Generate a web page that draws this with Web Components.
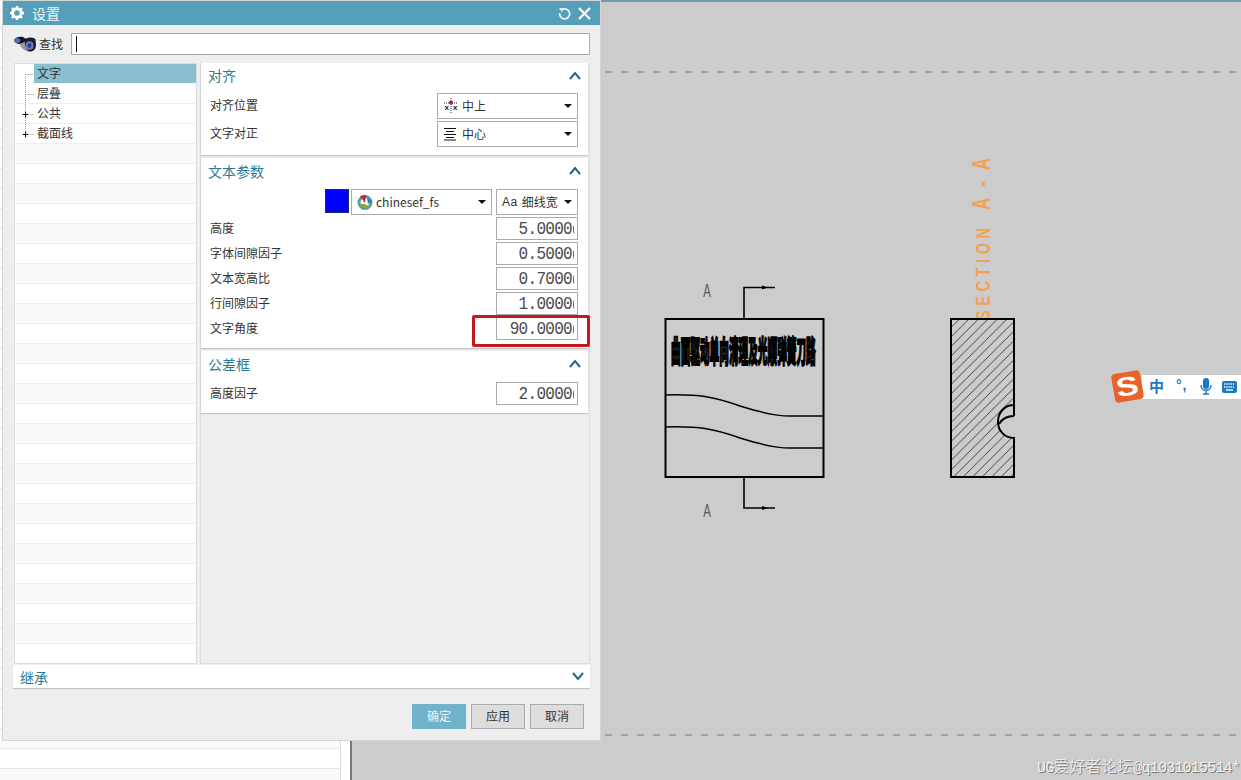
<!DOCTYPE html>
<html lang="zh">
<head>
<meta charset="utf-8">
<title>设置</title>
<style>
html,body{margin:0;padding:0;width:1241px;height:780px;overflow:hidden;background:#ccc;font:12px/1.2 "Noto Sans CJK SC","Liberation Sans",sans-serif;color:#333}
</style>
</head>
<body>
<ug-desktop>
  <ug-dialog slot="dialog" heading="设置">
    <ug-search></ug-search>
    <ug-main>
      <ug-tree slot="tree">
        <ug-tree-row selected first>文字</ug-tree-row>
        <ug-tree-row>层叠</ug-tree-row>
        <ug-tree-row expand>公共</ug-tree-row>
        <ug-tree-row expand last>截面线</ug-tree-row>
      </ug-tree>
      <ug-section heading="对齐" style="--top:4px;--ly:-2px;--ty:-2px">
        <ug-row label="对齐位置"><ug-select w="141">
          <svg slot="icon" width="16" height="16" viewBox="0 0 16 16"><path d="M8 0v16M1 5h14" stroke="#333" stroke-width="1" stroke-dasharray="1 1" fill="none"/><circle cx="8" cy="4.500" r="2" fill="#a81c3c"/><text x="1.500" y="12" font-size="8" font-weight="700" font-family="Liberation Sans" fill="#222">x</text><text x="10" y="12" font-size="8" font-weight="700" font-family="Liberation Sans" fill="#222">x</text></svg>中上</ug-select></ug-row>
        <ug-row label="文字对正"><ug-select w="141">
          <svg slot="icon" width="16" height="16" viewBox="0 0 16 16"><path d="M1 2.500h12M3 5.500h8M1 8.500h12M3 11.500h8M1 14h12" stroke="#111" stroke-width="1" fill="none"/></svg>中心</ug-select></ug-row>
      </ug-section>
      <ug-section heading="文本参数">
        <ug-row>
          <ug-swatch></ug-swatch>
          <ug-select w="141">
            <svg slot="icon" width="16" height="16" viewBox="0 0 16 16"><circle cx="8" cy="8.500" r="6" fill="none" stroke="#4aa0a8" stroke-width="3"/><path d="M2 10c2 5 9 6 12 1-3 1-5 0-6-1z" fill="#8aa840"/><path d="M3 2l6-1-1 8z" fill="#c4242c"/><path d="M10 4l5 3-4 3z" fill="#2a7ab8"/></svg>chinesef_fs</ug-select>
          <ug-select w="82" gap="0"><span style="font-family:'Liberation Sans';letter-spacing:.5px;margin-right:4px">Aa</span>细线宽</ug-select>
        </ug-row>
        <ug-row label="高度"><ug-num>5.0000</ug-num></ug-row>
        <ug-row label="字体间隙因子"><ug-num>0.5000</ug-num></ug-row>
        <ug-row label="文本宽高比"><ug-num>0.7000</ug-num></ug-row>
        <ug-row label="行间隙因子"><ug-num>1.0000</ug-num></ug-row>
        <ug-row label="文字角度"><ug-num>90.0000</ug-num></ug-row>
      </ug-section>
      <ug-section heading="公差框">
        <ug-row label="高度因子"><ug-num>2.0000</ug-num></ug-row>
      </ug-section>
    </ug-main>
    <ug-collapsed>继承</ug-collapsed>
    <ug-footer>
      <ug-button primary>确定</ug-button>
      <ug-button>应用</ug-button>
      <ug-button>取消</ug-button>
    </ug-footer>
    <ug-highlight></ug-highlight>
  </ug-dialog>
  <ug-drawing slot="canvas"></ug-drawing>
</ug-desktop>
<script>
function def(name, css, html, setup){
  customElements.define(name, class extends HTMLElement{
    connectedCallback(){
      if(this.shadowRoot) return;
      const r=this.attachShadow({mode:'open'});
      const h=typeof html==='function'?html(this):html;
      r.innerHTML='<style>'+css+'</style>'+h;
      if(setup) setup(this,r);
    }
  });
}
const CHEV_UP='<svg style="margin-bottom:2px" width="12" height="9" viewBox="0 0 12 9"><path d="M1 8l5-6 5 6" fill="none" stroke="#1d6a85" stroke-width="2"/></svg>';
const CHEV_DOWN='<svg width="12" height="9" viewBox="0 0 12 9"><path d="M1 1l5 6 5-6" fill="none" stroke="#1d6a85" stroke-width="2"/></svg>';

def('ug-desktop',`
  :host{display:flex;position:relative;width:1241px;height:780px;background:#ccc;overflow:hidden}
  .list{flex:none;background:repeating-linear-gradient(#fff 0,#fff 8px,#e8e8e8 8px,#e8e8e8 9px,#fafafa 9px,#fafafa 28px,#e8e8e8 28px,#e8e8e8 29px,#fff 29px,#fff 40px);border-right:1px solid #ddd;box-sizing:border-box;width:341px}
  .gap{width:9px;flex:none;background:#fff}
  .rule{width:2px;flex:none;background:#777}
  .canvas{flex:1;position:relative;background:#ccc;border-top:2px solid #6f9ab0;height:778px}
`,`<div class="list"></div><div class="gap"></div><div class="rule"></div>
  <div class="canvas"><slot name="canvas"></slot></div>
  <slot name="dialog"></slot>`);

def('ug-dialog',`
  :host{position:absolute;left:3px;top:1px;width:597px;height:739px;background:#eee;box-shadow:0 0 0 1px #d4d4d4;display:flex;flex-direction:column;box-sizing:border-box}
  .title{height:24px;flex:none;background:#559fba;display:flex;align-items:center;color:#eef6f9;font-size:14px}
  .gear{margin:0 8px 0 7px;display:block}
  .txt{flex:1;line-height:24px}
  .btns{display:flex;gap:7px;margin-right:9px;align-items:center}
`,t=>`<div class="title">
    <svg class="gear" width="14" height="14" viewBox="0 0 14 14"><circle cx="7" cy="7" r="4.300" fill="none" stroke="#fff" stroke-width="3"/><path d="M7 0v3M7 11v3M0 7h3M11 7h3M2 2l2 2M10 10l2 2M12 2l-2 2M4 10l-2 2" stroke="#fff" stroke-width="2.400"/></svg>
    <span class="txt">${t.getAttribute('heading')}</span>
    <span class="btns">
      <svg width="13" height="13" viewBox="0 0 13 13"><path d="M4 2.600A5 5 0 1 1 1.700 6.200" fill="none" stroke="#e6f2f6" stroke-width="1.800"/><path d="M1 1l4.500.3L4 5.200z" fill="#e6f2f6"/></svg>
      <svg width="13" height="13" viewBox="0 0 13 13"><path d="M1 1l11 11M12 1L1 12" stroke="#fff" stroke-width="2.200"/></svg>
    </span>
  </div><slot></slot>`);

def('ug-search',`
  :host{display:flex;align-items:center;height:22px;margin:8px 10px 8px 11px;flex:none}
  svg{display:block;flex:none}
  .l{width:32px;margin-left:3px;flex:none;color:#333}
  .in{flex:1;height:22px;box-sizing:border-box;background:#fff;border:1px solid #aaa;display:flex;align-items:center;padding-left:4px}
  .c{width:1px;height:16px;background:#111}
`,`<svg width="22" height="17" viewBox="0 0 22 17">
    <path d="M5 7l6-3 5 2-1 10-5-2-3-3z" fill="#9a9a9a"/>
    <path d="M0 4C1 1.500 5 0 9 1l3 2-1.500 3-5 2C3 8 .6 6.500 0 4z" fill="#16161c"/>
    <ellipse cx="3.300" cy="4.600" rx="3" ry="2.300" fill="#5c70c0"/>
    <path d="M11 3C15 .8 20 1 21.500 3.500L22 9c0 4-3 7-6 6.500-3-.5-6-5-5-12.500z" fill="#1a1c26"/>
    <ellipse cx="15.500" cy="9.500" rx="4" ry="4.200" fill="#6a7ccc"/>
    <ellipse cx="15.500" cy="9.500" rx="2" ry="2.200" fill="#303a90"/>
  </svg>
  <span class="l">查找</span><div class="in"><div class="c"></div></div>`);

def('ug-main',`
  :host{display:flex;height:601px;margin:0 10px 0 11px;gap:3px;flex:none}
  .p{flex:1;background:#eee;border:1px solid #ddd;border-top:0;box-sizing:border-box;display:flex;flex-direction:column;gap:3px;padding-right:1px}
`,`<slot name="tree"></slot><div class="p"><slot></slot></div>`);

def('ug-tree',`
  :host{display:block;width:183px;flex:none;height:601px;background:#fff;border:1px solid #ddd;box-sizing:border-box;overflow:hidden}
  .e{height:19px;border-bottom:1px solid #eee;background:#fff}
  .e.a{background:#fafafa}
`,()=>{let s='<slot></slot>';for(let i=0;i<26;i++)s+=`<div class="e ${i%2?'':'a'}"></div>`;return s;});

def('ug-tree-row',`
  :host{display:flex;height:19px;border-bottom:1px solid #eee;align-items:center;background:#fff}
  svg{display:block;flex:none}
  .t{flex:1;height:19px;line-height:17px;padding-left:3px;color:#333}
  :host([selected]){border-bottom-color:#fff}
  :host([selected]) .t{background:#89bfd0}
`,t=>{
  const a=t.hasAttribute('first')?10:0, b=t.hasAttribute('last')?10:20;
  const plus=t.hasAttribute('expand')?'<rect x="6.500" y="6.500" width="8" height="8" fill="#fff"/><path d="M7.500 10.500h6M10.500 7.500v6" stroke="#111" stroke-width="1"/>':'';
  return `<svg width="19" height="20" viewBox="0 0 19 20"><path d="M10.500 ${a}V${b}M10.500 10.500H19" stroke="#999" stroke-dasharray="1 1" fill="none"/>${plus}</svg><div class="t"><slot></slot></div>`;
});

def('ug-section',`
  :host{display:block;background:#fff;box-shadow:0 1px 1px #c4c4c4;padding-bottom:8px;flex:none}
  .h{height:26px;display:flex;align-items:center;justify-content:space-between;padding:0 7px 0 7px;color:#2a7a96;font-size:14px}
  .h span{margin-top:var(--ty,0)}
  .b{display:flex;flex-direction:column;gap:2px;padding-top:var(--top,5px)}
`,t=>`<div class="h"><span>${t.getAttribute('heading')}</span>${CHEV_UP}</div><div class="b"><slot></slot></div>`);

def('ug-row',`
  :host{display:flex;align-items:center;justify-content:flex-end;padding:0 10px 0 9px;gap:4px}
  .l{flex:1;color:#333;margin-top:var(--ly,0)}
  .l:empty{display:none}
`,t=>`<span class="l">${t.getAttribute('label')||''}</span><slot></slot>`);

def('ug-select',`
  :host{display:flex;align-items:center;height:26px;box-sizing:border-box;border:1px solid #aaa;background:#fff;padding-left:5px;color:#333;flex:none}
  .i{display:flex;flex:none}
  .x{flex:1;white-space:nowrap;font-size:12px;display:flex;align-items:center;min-width:0}
  .a{width:0;height:0;border:4px solid transparent;border-top:4.500px solid #111;border-bottom:0;flex:none;margin-right:5px}
`,t=>`<span class="i" style="margin-right:${t.getAttribute('gap')||3}px"><slot name="icon"></slot></span><span class="x"><slot></slot></span><span class="a"></span>`,
(t)=>{t.style.width=t.getAttribute('w')+'px';});

def('ug-swatch',`:host{display:block;width:24px;height:24px;box-sizing:border-box;background:#0000ff;border:1px solid #1c2a6a;margin:0 -2px 2px 0;flex:none}`,'');

def('ug-num',`
  :host{display:flex;justify-content:flex-end;align-items:center;width:82px;height:23px;box-sizing:border-box;border:1px solid #aaa;background:#fff;flex:none;padding-right:1px}
  div{font:16px/21px "Liberation Mono",monospace;letter-spacing:-.7px;color:#4a4a4a;white-space:nowrap;transform:translateY(1.500px) scaleY(1.14)}
  i{display:block;width:2px;height:9px;border-left:1.500px solid #666;border-radius:50%;margin:2px 0 0 1px;box-sizing:content-box}
`,`<div><slot></slot></div><i></i>`);

def('ug-collapsed',`
  :host{display:flex;height:23px;margin:1px 10px 0 10px;flex:none;background:#fff;box-shadow:0 1px 1px #c4c4c4;align-items:center;justify-content:space-between;padding:0 6px 0 7px;color:#2a7a96;font-size:14px}
`,`<span style="margin-top:1px"><slot></slot></span><span style="margin-bottom:1px;display:flex">${CHEV_DOWN}</span>`);

def('ug-footer',`
  :host{display:flex;justify-content:flex-end;gap:5px;margin:16px 16px 0 0;flex:none}
`,`<slot></slot>`);

def('ug-button',`
  :host{display:flex;width:54px;height:25px;box-sizing:border-box;align-items:center;justify-content:center;background:#ddd;border:1px solid #aaa;color:#333;font-size:12px}
  :host([primary]){background:#70b2c9;border-color:#70b2c9;color:#eef6f9}
`,`<slot></slot>`);

def('ug-highlight',`
  :host{position:absolute;left:469px;top:314px;width:118px;height:32px;box-sizing:border-box;border:3px solid #c41a1f;border-radius:2px;pointer-events:none}
`,'');

def('ug-drawing',`
  :host{display:block;position:absolute;inset:-2px 0 0 0}
  svg{position:absolute;left:0;top:0;display:block}
  .wm{position:absolute;right:1px;bottom:3px;color:#f2f2f2;text-shadow:1px 1px 0 #777;white-space:nowrap;line-height:18px}
  .wm .l{font:15px "Liberation Mono",monospace;letter-spacing:-.8px}
  .wm .c{font:16px "Noto Sans CJK SC",sans-serif;font-weight:300}
`,`<svg width="889" height="780" viewBox="352 0 889 780">
  <defs>
    <pattern id="h" width="9.500" height="9.500" patternUnits="userSpaceOnUse" patternTransform="translate(950 319)">
      <path d="M-1 10.500L10.500 -1M-1 1L1 -1M8.500 10.500L10.500 8.500" stroke="#333" stroke-width=".9" fill="none"/>
    </pattern>
  </defs>
  <path d="M605 72H1241M605 735H1241" stroke="#777" stroke-width="1" stroke-dasharray="7 9" fill="none"/>
  <rect x="665.500" y="319" width="158" height="158" fill="none" stroke="#000" stroke-width="2"/>
  <path d="M744 319V287.500H775M744 477V508H775" fill="none" stroke="#000" stroke-width="1.600"/>
  <path d="M762 285.500l6 2-6 2zM762 506l6 2-6 2z" fill="#000"/>
  <path d="M665 395C700 394 715 397 740 406C762 413 775 416 790 416H823M665 427C700 426 715 429 740 438C762 445 775 448 790 448H823" fill="none" stroke="#000" stroke-width="1.500"/>
  <text transform="translate(707 297) scale(.6 1)" text-anchor="middle" font-family="Liberation Sans" font-size="19" fill="#555">A</text>
  <text transform="translate(707 517) scale(.6 1)" text-anchor="middle" font-family="Liberation Sans" font-size="19" fill="#555">A</text>
  <text transform="translate(671 362) scale(.322 1)" font-family="Noto Sans CJK SC" font-size="30" font-weight="900" stroke="#000" stroke-width="2" fill="#000">曲面驱动单向清理及光顺弹簧刀路</text>
  <text transform="translate(990 320) rotate(-90) scale(.72 1)" font-family="Liberation Sans" font-weight="700" font-size="20" fill="#f4a252" style="letter-spacing:6.500px">SECTION</text>
  <text transform="translate(990 210) rotate(-90) scale(.68 1)" font-family="Liberation Sans" font-weight="700" font-size="25" fill="#f4a252" style="letter-spacing:5px" xml:space="preserve">A - A</text>
  <path d="M951 319H1014V405C1005 405 998 412 998 422C998 431 1005 438 1014 438V477H951Z" fill="#ccc"/>
  <path d="M951 319H1014V405C1005 405 998 412 998 422C998 431 1005 438 1014 438V477H951Z" fill="url(#h)"/>
  <path d="M1014 405V416C1007 416 1002 419 999 424" fill="#ccc"/>
  <path d="M1014 416C1007 416 1002 419 999 424" fill="none" stroke="#000" stroke-width="2"/>
  <path d="M1014 416V319H951V477H1014V438C1005 438 998 431 998 422C998 412 1005 405 1014 405" fill="none" stroke="#000" stroke-width="2"/>
</svg>
<div class="wm"><span class="l">UG</span><span class="c">爱好者论坛</span><span class="l">@q1031015514*</span></div>
<ug-ime></ug-ime>`);

def('ug-ime',`
  :host{position:absolute;left:760px;top:369px;width:129px;height:36px;display:block}
  .b{position:absolute;left:30px;top:6px;right:0;height:24px;background:#fff}
  .logo{position:absolute;left:1px;top:3px;width:29px;height:29px;background:#e8622a;border-radius:4px;transform:rotate(-10deg);color:#fff;text-align:center;font:900 28px/29px "Liberation Sans",sans-serif}
  .logo span{display:inline-block;transform:scale(1.2,.95)}
  .z{position:absolute;left:37px;top:8px;font:700 15px/18px "Noto Sans CJK SC",sans-serif;color:#1a78c2}
  .p{position:absolute;left:64px;top:7px;font:700 14px/18px "Liberation Sans",sans-serif;color:#1a78c2;letter-spacing:1px}
  svg{position:absolute;display:block}
`,`<div class="b"></div><div class="logo"><span>S</span></div><span class="z">中</span><span class="p">°,</span>
  <svg style="left:88px;top:9px" width="12" height="18" viewBox="0 0 12 18"><rect x="3" y="0" width="6" height="11" rx="3" fill="#1a78c2"/><path d="M1 7c0 7 10 7 10 0M6 12v4M3 16h6" stroke="#1a78c2" stroke-width="1.400" fill="none"/></svg>
  <svg style="left:110px;top:12px" width="15" height="12" viewBox="0 0 15 12"><rect width="15" height="12" rx="2" fill="#1a78c2"/><path d="M2 3h11M2 6h11" stroke="#fff" stroke-width="1.300" stroke-dasharray="1.300 .9"/><path d="M4 9h7" stroke="#fff" stroke-width="1.400"/></svg>`);
</script>
</body>
</html>
